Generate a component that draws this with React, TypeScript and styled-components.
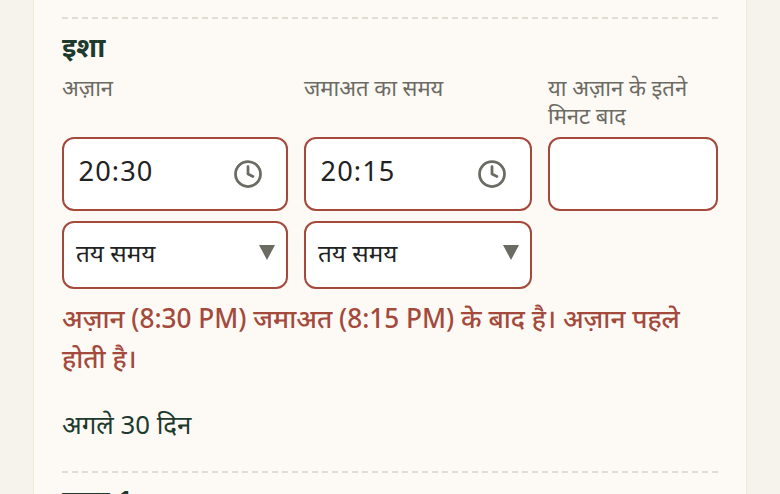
import React from "react";
import styled, { createGlobalStyle } from "styled-components";

const Global = createGlobalStyle`
  html, body { margin: 0; padding: 0; background: #f6f2ec; }
  body { font-family: "Noto Sans", "Open Sans", sans-serif; }
`;
const Page = styled.div`
  width: 780px; height: 494px; overflow: hidden; background: #f6f2ec;
  display: flex; justify-content: center;
`;
const Card = styled.main`
  width: 714px; box-sizing: border-box; background: #fdf9f4;
  border-left: 1.5px solid #f3e7d6; border-right: 1.5px solid #f3e7d6;
  padding: 17px 28px 0;
`;
const Section = styled.section`
  border-top: 2px dashed #e2ddd4;
  padding-top: 10px;
`;
const NextSection = styled(Section)`
  margin-top: 28px;
  padding-top: 9px;
`;
const Title = styled.h3`
  margin: 0; font-size: 27.5px; line-height: 36px; font-weight: 700; color: #1e3a2f;
`;
const Grid = styled.div`
  display: grid; grid-template-columns: 226px 228px 170px; column-gap: 16px; row-gap: 10px; margin-top: 8px;
`;
const Label = styled.label`
  font-size: 22px; line-height: 28px; color: #6b6b63; height: 56px; margin-bottom: 8px; display: block;
`;
const Box = styled.div`
  box-sizing: border-box; border: 2px solid #a34a3c; border-radius: 12px; background: #fff;
  display: flex; align-items: center; justify-content: space-between;
`;
const TimeBox = styled(Box)`
  height: 74px; padding: 0 23px 0 14.5px; font-size: 27.2px; letter-spacing: 1.1px; color: #222;
  span { margin-top: -8px; }
`;
const SelectBox = styled(Box)`
  height: 68px; padding: 0 11.5px 6px 12px; font-size: 24.3px; color: #222;
`;
const Caret = styled.i`
  width: 0; height: 0; border-left: 8px solid transparent; border-right: 8px solid transparent;
  border-top: 15px solid #6b6b63; display: block;
`;
const ErrorText = styled.p`
  margin: 10px 0 0; font-size: 26.2px; line-height: 39.5px; font-weight: 500; color: #a34a3c;
`;
const Next = styled.p`
  margin: 27px 0 0; font-size: 25.8px; line-height: 38px; color: #1e3a2f;
`;

const Clock = () => (
  <svg width="30" height="30" viewBox="0 0 24 24" fill="none" stroke="#6b6b63" strokeWidth="2.2" strokeLinecap="round" strokeLinejoin="round">
    <circle cx="12" cy="12" r="10" />
    <path d="M12 6v6l4 2" />
  </svg>
);

export default function App() {
  return (
    <Page>
      <Global />
      <Card>
        <Section>
          <Title>इशा</Title>
          <Grid>
            <div>
              <Label>अज़ान</Label>
              <TimeBox><span>20:30</span><Clock /></TimeBox>
            </div>
            <div>
              <Label>जमाअत का समय</Label>
              <TimeBox><span>20:15</span><Clock /></TimeBox>
            </div>
            <div>
              <Label>या अज़ान के इतने मिनट बाद</Label>
              <TimeBox />
            </div>
            <SelectBox>तय समय<Caret /></SelectBox>
            <SelectBox>तय समय<Caret /></SelectBox>
          </Grid>
          <ErrorText>अज़ान (8:30 PM) जमाअत (8:15 PM) के बाद है। अज़ान पहले होती है।</ErrorText>
          <Next>अगले 30 दिन</Next>
        </Section>
        <NextSection>
          <Title>जुमा 1</Title>
        </NextSection>
      </Card>
    </Page>
  );
}
